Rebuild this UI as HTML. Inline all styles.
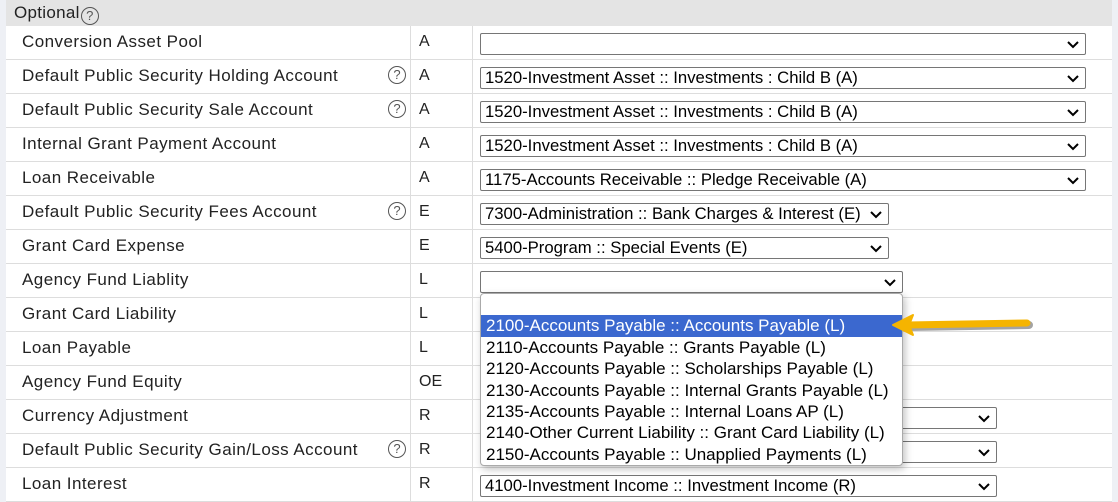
<!DOCTYPE html>
<html><head><style>
body{margin:0;width:1118px;height:502px;overflow:hidden;background:#eef0f5;font-family:"Liberation Sans",sans-serif;position:relative}
.wrap{position:absolute;left:6px;top:0;width:1106px;height:502px;background:#fff}
.hdr{position:absolute;left:0;top:0;width:1106px;height:26px;background:#e4e4e4;font-size:17px;color:#222;letter-spacing:.3px}
.hdr span{position:absolute;left:8px;top:3px}
.row{position:absolute;left:0;width:1106px;height:33px;border-bottom:1px solid #ddd}
.c1{position:absolute;left:16px;top:6px;font-size:17px;letter-spacing:.45px;color:#222}
.c2{position:absolute;left:413px;top:7px;font-size:16px;color:#222}
.v1,.v2{position:absolute;top:0;width:1px;height:34px;background:#ddd}
.v1{left:404px}.v2{left:466px}
.q{position:absolute;left:382px;top:6px;width:18px;height:18px;border:1.5px solid #555;border-radius:50%;box-sizing:border-box;font-size:13px;text-align:center;line-height:16px;color:#555;letter-spacing:0}
.sel{position:absolute;left:474px;top:7px;height:22px;border:1px solid #767676;border-radius:2px;box-sizing:border-box;font-size:16.7px;line-height:20px;padding-left:4px;color:#000;background:#fff;white-space:nowrap}
.sel svg{position:absolute;right:6px;top:7px}
.dd{position:absolute;left:480px;top:293px;width:423px;height:173px;border:1px solid #aaa;border-radius:4px;background:#fff;box-sizing:border-box;box-shadow:2px 3px 8px rgba(0,0,0,.25);font-size:17px;overflow:hidden}
.dd div{height:21.4px;line-height:21.4px;padding-left:5px;white-space:nowrap}
.dd .hl{background:#3b68cf;color:#fff}
</style></head><body>
<div class="wrap">
<div class="hdr"><span>Optional<span style="display:inline-block;position:relative;left:1px;top:2px;width:18px;height:18px;border:1.5px solid #555;border-radius:50%;box-sizing:border-box;font-size:13px;text-align:center;line-height:16px;color:#555;letter-spacing:0">?</span></span></div>

<div class="row" style="top:26px"><div class="c1">Conversion Asset Pool</div><div class="v1"></div><div class="c2">A</div><div class="v2"></div><div class="sel" style="width:606px"><svg width="12" height="8"><path d="M1 1l5 5 5-5" stroke="#000" stroke-width="2" fill="none"/></svg></div></div>
<div class="row" style="top:60px"><div class="c1">Default Public Security Holding Account</div><div class="q">?</div><div class="v1"></div><div class="c2">A</div><div class="v2"></div><div class="sel" style="width:606px">1520-Investment Asset :: Investments : Child B (A)<svg width="12" height="8"><path d="M1 1l5 5 5-5" stroke="#000" stroke-width="2" fill="none"/></svg></div></div>
<div class="row" style="top:94px"><div class="c1">Default Public Security Sale Account</div><div class="q">?</div><div class="v1"></div><div class="c2">A</div><div class="v2"></div><div class="sel" style="width:606px">1520-Investment Asset :: Investments : Child B (A)<svg width="12" height="8"><path d="M1 1l5 5 5-5" stroke="#000" stroke-width="2" fill="none"/></svg></div></div>
<div class="row" style="top:128px"><div class="c1">Internal Grant Payment Account</div><div class="v1"></div><div class="c2">A</div><div class="v2"></div><div class="sel" style="width:606px">1520-Investment Asset :: Investments : Child B (A)<svg width="12" height="8"><path d="M1 1l5 5 5-5" stroke="#000" stroke-width="2" fill="none"/></svg></div></div>
<div class="row" style="top:162px"><div class="c1">Loan Receivable</div><div class="v1"></div><div class="c2">A</div><div class="v2"></div><div class="sel" style="width:606px">1175-Accounts Receivable :: Pledge Receivable (A)<svg width="12" height="8"><path d="M1 1l5 5 5-5" stroke="#000" stroke-width="2" fill="none"/></svg></div></div>
<div class="row" style="top:196px"><div class="c1">Default Public Security Fees Account</div><div class="q">?</div><div class="v1"></div><div class="c2">E</div><div class="v2"></div><div class="sel" style="width:409px">7300-Administration :: Bank Charges &amp; Interest (E)<svg width="12" height="8"><path d="M1 1l5 5 5-5" stroke="#000" stroke-width="2" fill="none"/></svg></div></div>
<div class="row" style="top:230px"><div class="c1">Grant Card Expense</div><div class="v1"></div><div class="c2">E</div><div class="v2"></div><div class="sel" style="width:409px">5400-Program :: Special Events (E)<svg width="12" height="8"><path d="M1 1l5 5 5-5" stroke="#000" stroke-width="2" fill="none"/></svg></div></div>
<div class="row" style="top:264px"><div class="c1">Agency Fund Liablity</div><div class="v1"></div><div class="c2">L</div><div class="v2"></div><div class="sel" style="width:423px"><svg width="12" height="8"><path d="M1 1l5 5 5-5" stroke="#000" stroke-width="2" fill="none"/></svg></div></div>
<div class="row" style="top:298px"><div class="c1">Grant Card Liability</div><div class="v1"></div><div class="c2">L</div><div class="v2"></div></div>
<div class="row" style="top:332px"><div class="c1">Loan Payable</div><div class="v1"></div><div class="c2">L</div><div class="v2"></div><div class="sel" style="width:423px"></div></div>
<div class="row" style="top:366px"><div class="c1">Agency Fund Equity</div><div class="v1"></div><div class="c2">OE</div><div class="v2"></div></div>
<div class="row" style="top:400px"><div class="c1">Currency Adjustment</div><div class="v1"></div><div class="c2">R</div><div class="v2"></div><div class="sel" style="width:517px"><svg width="12" height="8"><path d="M1 1l5 5 5-5" stroke="#000" stroke-width="2" fill="none"/></svg></div></div>
<div class="row" style="top:434px"><div class="c1">Default Public Security Gain/Loss Account</div><div class="q">?</div><div class="v1"></div><div class="c2">R</div><div class="v2"></div><div class="sel" style="width:517px"><svg width="12" height="8"><path d="M1 1l5 5 5-5" stroke="#000" stroke-width="2" fill="none"/></svg></div></div>
<div class="row" style="top:468px"><div class="c1">Loan Interest</div><div class="v1"></div><div class="c2">R</div><div class="v2"></div><div class="sel" style="width:517px">4100-Investment Income :: Investment Income (R)<svg width="12" height="8"><path d="M1 1l5 5 5-5" stroke="#000" stroke-width="2" fill="none"/></svg></div></div>
</div>
<div class="dd">
<div></div>
<div class="hl">2100-Accounts Payable :: Accounts Payable (L)</div>
<div>2110-Accounts Payable :: Grants Payable (L)</div>
<div>2120-Accounts Payable :: Scholarships Payable (L)</div>
<div>2130-Accounts Payable :: Internal Grants Payable (L)</div>
<div>2135-Accounts Payable :: Internal Loans AP (L)</div>
<div>2140-Other Current Liability :: Grant Card Liability (L)</div>
<div>2150-Accounts Payable :: Unapplied Payments (L)</div>
</div>
<svg style="position:absolute;left:885px;top:310px" width="150" height="32">
<path d="M22 15 L142 13" stroke="#333" stroke-opacity=".45" stroke-width="8" stroke-linecap="round" transform="translate(2,2)"/>
<path d="M22 15 L142 13" stroke="#f5b400" stroke-width="7" stroke-linecap="round"/>
<path d="M8 15 L28 5 L24 15 L28 25 Z" fill="#f5b400" stroke="#f5b400" stroke-width="2" stroke-linejoin="round"/>
</svg>
</body></html>
